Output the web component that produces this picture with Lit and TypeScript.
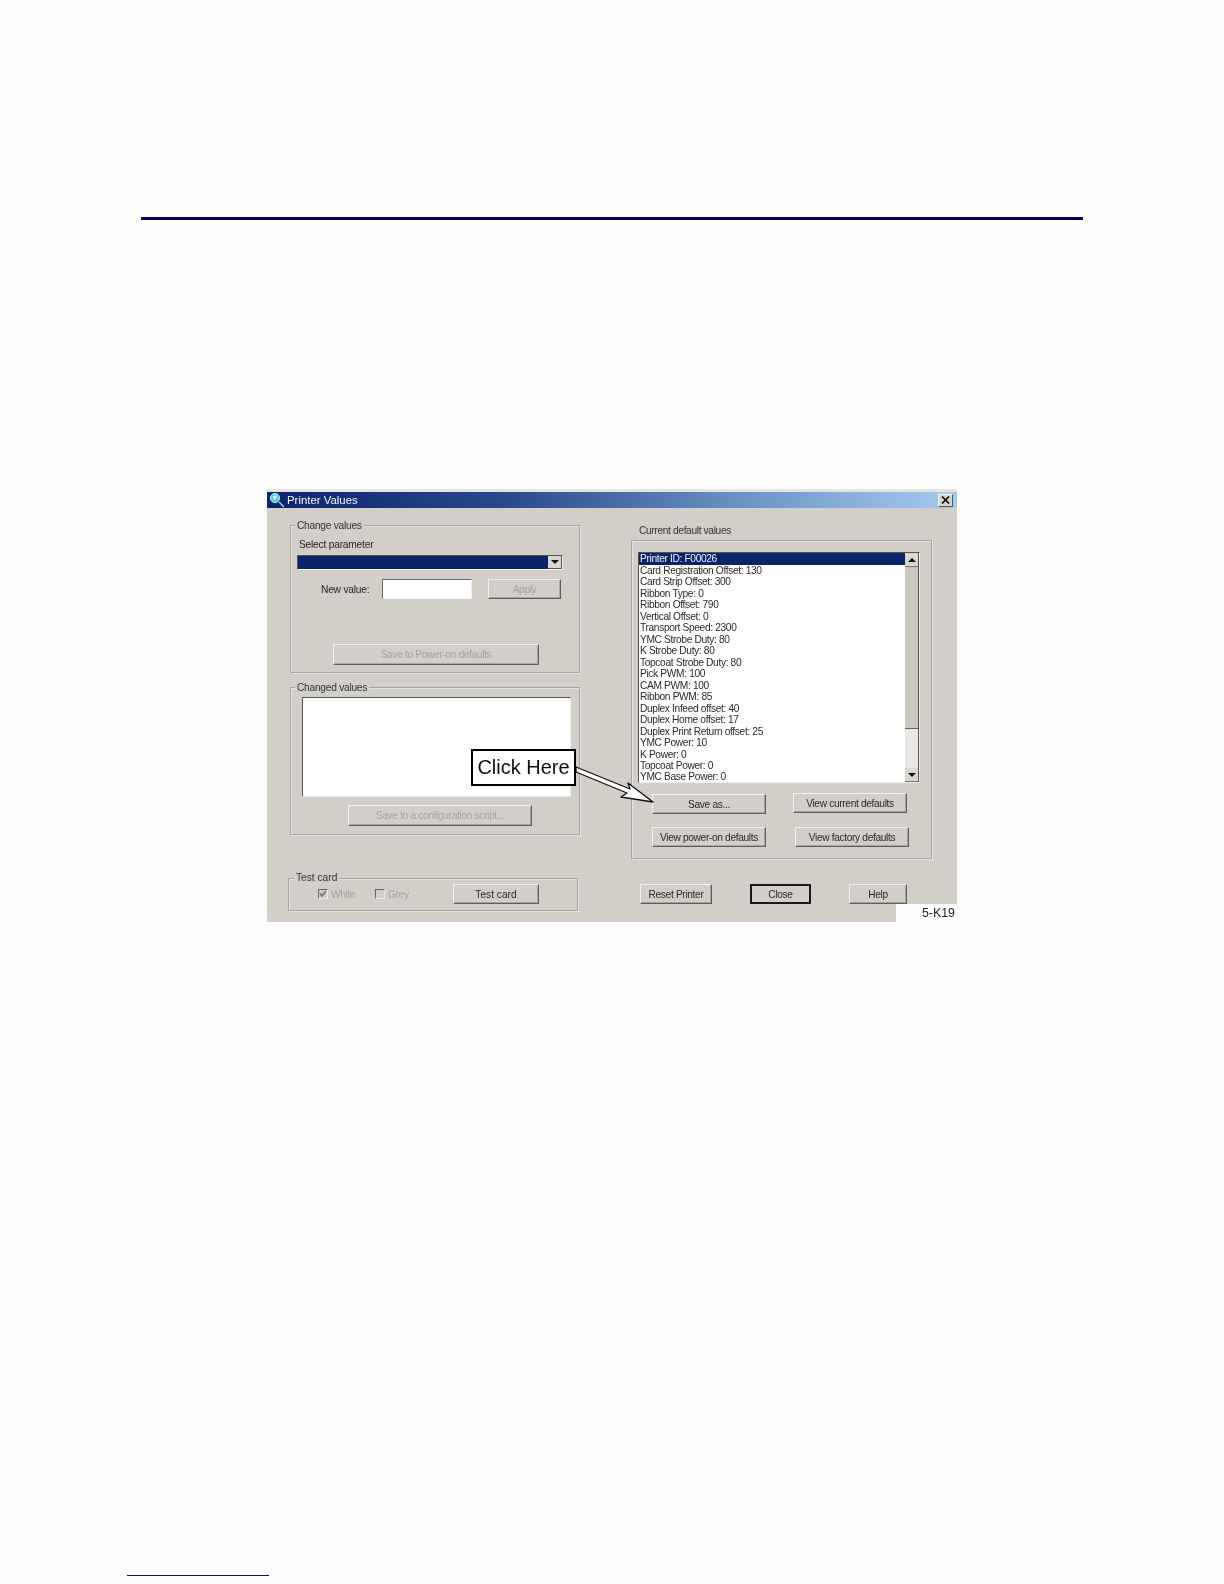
import { LitElement, html, css } from "lit";
import { customElement } from "lit/decorators.js";

const ROWS = [
  "Printer ID: F00026",
  "Card Registration Offset: 130",
  "Card Strip Offset: 300",
  "Ribbon Type: 0",
  "Ribbon Offset: 790",
  "Vertical Offset: 0",
  "Transport Speed: 2300",
  "YMC Strobe Duty: 80",
  "K Strobe Duty: 80",
  "Topcoat Strobe Duty: 80",
  "Pick PWM: 100",
  "CAM PWM: 100",
  "Ribbon PWM: 85",
  "Duplex Infeed offset: 40",
  "Duplex Home offset: 17",
  "Duplex Print Return offset: 25",
  "YMC Power: 10",
  "K Power: 0",
  "Topcoat Power: 0",
  "YMC Base Power: 0",
];

@customElement("app-root")
export class AppRoot extends LitElement {
  static styles = css`
    :host {
      display: block;
      height: 1584px;
      background: #fefefe;
      overflow: hidden;
      font-family: "Liberation Sans", Arial, sans-serif;
    }
    .rule {
      margin: 217px 0 0 141px;
      width: 942px;
      height: 3px;
      background: #000066;
    }
    .dialog {
      position: relative;
      margin: 269px 0 0 267px;
      width: 690px;
      height: 433px;
      background: #d2cec8;
      font-size: 10.2px;
      letter-spacing: -0.35px;
      color: #262626;
      box-sizing: border-box;
      padding-top: 3px;
      box-shadow: inset 0 3px 0 #e6e4e0;
      filter: blur(0.3px);
    }
    .title {
      display: flex;
      align-items: center;
      height: 16px;
      background: linear-gradient(90deg, #0a246a 0%, #2a4a8a 35%, #6f95c6 70%, #a6caf0 100%);
      color: #f4f6fa;
      font-size: 11.4px;
      letter-spacing: 0;
      padding-right: 4px;
    }
    .ticon {
      width: 18px;
      height: 16px;
      margin-left: 2px;
      flex: none;
    }
    .ttext {
      flex: 1;
    }
    .x {
      width: 15px;
      height: 13px;
      background: #d8d5cf;
      border: 1px solid;
      border-color: #f4f3f0 #55534f #55534f #f4f3f0;
      box-sizing: border-box;
      display: flex;
      align-items: center;
      justify-content: center;
    }
    .body {
      display: grid;
      grid-template-columns: 290px 301px;
      column-gap: 51px;
      padding-left: 23px;
    }
    .col-l {
      padding-top: 17px;
    }
    .group {
      position: relative;
      box-sizing: border-box;
      border: 1px solid #a6a39e;
      box-shadow: 1px 1px 0 #e6e4e0, inset 1px 1px 0 #e6e4e0;
    }
    .legend {
      position: absolute;
      top: -7px;
      left: 4px;
      padding: 0 2px;
      line-height: 14px;
      background: #d2cec8;
      color: #333;
      letter-spacing: -0.25px;
    }
    .g1 {
      height: 148px;
      padding: 12px 0 0 6px;
    }
    .sel-label {
      height: 14px;
      line-height: 14px;
      margin-left: 2px;
      margin-bottom: 3px;
      letter-spacing: -0.2px;
    }
    .combo {
      display: flex;
      width: 266px;
      height: 15px;
      box-sizing: border-box;
      border: 1px solid;
      border-color: #55534f #f6f5f2 #f6f5f2 #55534f;
    }
    .combo-fill {
      flex: 1;
      background: #0a246a;
    }
    .combo-btn {
      width: 14px;
      display: flex;
      align-items: center;
      justify-content: center;
      background: #dad7d1;
      border-right: 1px solid #55534f;
      border-bottom: 1px solid #55534f;
      box-sizing: border-box;
    }
    .tri {
      width: 0;
      height: 0;
      border-left: 4px solid transparent;
      border-right: 4px solid transparent;
      border-top: 4px solid #111;
    }
    .tri.up {
      border-top: 0;
      border-bottom: 4px solid #111;
    }
    .row {
      display: flex;
      align-items: center;
    }
    .nv-row {
      margin-top: 9px;
      height: 20px;
    }
    .nv-label {
      width: 46px;
      margin-left: 24px;
      white-space: nowrap;
      letter-spacing: -0.2px;
    }
    .input {
      width: 90px;
      height: 20px;
      margin-left: 15px;
      background: #fff;
      box-sizing: border-box;
      border: 1px solid;
      border-color: #6a6864 #f0efec #f0efec #6a6864;
    }
    .btn {
      display: flex;
      align-items: center;
      justify-content: center;
      box-sizing: border-box;
      height: 20px;
      white-space: nowrap;
      border: 1px solid;
      border-color: #f2f1ee #5f5d5a #5f5d5a #f2f1ee;
      box-shadow: inset -1px -1px 0 #a9a6a1;
      color: #2a2a2a;
      flex: none;
    }
    .off {
      color: #a5a29c;
    }
    .apply {
      width: 73px;
      margin-left: 16px;
    }
    .save-pwr {
      width: 206px;
      height: 21px;
      margin: 45px 0 0 36px;
    }
    .g2 {
      height: 148px;
      margin-top: 14px;
      padding: 9px 0 0 11px;
    }
    .ta {
      width: 269px;
      height: 100px;
      box-sizing: border-box;
      background: #fff;
      border: 1px solid;
      border-color: #55534f #ecebe7 #ecebe7 #55534f;
    }
    .save-cfg {
      width: 184px;
      height: 21px;
      margin: 8px 0 0 46px;
    }
    .g3 {
      height: 33px;
      width: 290px;
      margin: 43px 0 0 -2px;
      padding: 5px 0 0 29px;
      display: flex;
      align-items: flex-start;
    }
    .g3 .legend {
      top: -8px;
      left: 5px;
      letter-spacing: 0;
    }
    .chk-wrap {
      display: flex;
      align-items: center;
      height: 20px;
      flex: none;
    }
    .w1 { width: 57px; }
    .w2 { width: 78px; }
    .chk {
      width: 10px;
      height: 10px;
      margin-right: 3px;
      box-sizing: border-box;
      border: 1px solid;
      border-color: #6a6864 #ecebe7 #ecebe7 #6a6864;
      display: flex;
    }
    .tc {
      width: 86px;
      height: 20px;
      letter-spacing: 0;
    }
    .cur-label {
      height: 14px;
      line-height: 14px;
      margin: 16px 0 2px 8px;
      color: #333;
    }
    .g4 {
      height: 319px;
      padding: 11px 0 0 6px;
    }
    .list {
      display: flex;
      width: 282px;
      height: 231px;
      box-sizing: border-box;
      background: #fff;
      border: 1px solid;
      border-color: #55534f #ecebe7 #ecebe7 #55534f;
    }
    .items {
      flex: 1;
      overflow: hidden;
    }
    .item {
      height: 11.47px;
      line-height: 11.47px;
      padding-left: 1px;
      white-space: nowrap;
      color: #2a2a2a;
    }
    .item.sel {
      height: 12px;
      background: #0a246a;
      color: #eef0f6;
    }
    .sb {
      width: 13px;
      flex: none;
      display: flex;
      flex-direction: column;
      background: #eae8e4;
      border-right: 1px solid #55534f;
      box-sizing: content-box;
    }
    .sb-btn {
      height: 14px;
      flex: none;
      display: flex;
      align-items: center;
      justify-content: center;
      background: #dad7d1;
      border-bottom: 1px solid #77756f;
      box-sizing: border-box;
    }
    .sb-thumb {
      height: 162px;
      flex: none;
      background: #cbc8c2;
      border-bottom: 1px solid #5f5d5a;
      box-sizing: border-box;
    }
    .sb-track {
      flex: 1;
    }
    .r1 {
      margin: 11px 0 0 14px;
      height: 20px;
      align-items: flex-start;
    }
    .r2 {
      margin: 13px 0 0 14px;
      height: 20px;
    }
    .b114 { width: 114px; }
    .vc {
      width: 114px;
      margin: -1px 0 0 27px;
    }
    .vf {
      width: 114px;
      margin-left: 29px;
    }
    .r3 {
      margin: 25px 0 0 9px;
      height: 20px;
    }
    .reset { width: 72px; }
    .close {
      width: 61px;
      margin-left: 38px;
      border: 2px solid;
      border-color: #1a1a1a;
      box-shadow: none;
    }
    .help {
      width: 58px;
      margin-left: 38px;
    }
    .notch {
      position: absolute;
      right: 0;
      bottom: 0;
      width: 61px;
      height: 18px;
      background: #fefefe;
      color: #222;
      font-size: 12.4px;
      letter-spacing: 0;
      line-height: 19px;
      text-align: right;
      padding-right: 2px;
      box-sizing: border-box;
    }
    .callout {
      position: absolute;
      left: 204px;
      top: 260px;
      width: 105px;
      height: 37px;
      box-sizing: border-box;
      border: 2px solid #000;
      background: #fff;
      color: #111;
      font-size: 20px;
      letter-spacing: 0;
      display: flex;
      align-items: center;
      justify-content: center;
    }
    .arrow {
      position: absolute;
      left: 300px;
      top: 270px;
      width: 100px;
      height: 50px;
    }
    .foot {
      margin: 653px 0 0 127px;
      width: 142px;
      height: 1px;
      background: #101080;
    }
  `;

  render() {
    return html`
      <div class="rule"></div>
      <div class="dialog">
        <div class="title">
          <svg class="ticon" viewBox="0 0 18 16">
            <circle cx="6" cy="6" r="4.6" fill="#5fd0d8" stroke="#bfeef2" stroke-width="1" />
            <path d="M4 4.5 L7 3.5 L8 6 L5 7.5 Z" fill="#e8fbff" />
            <path d="M10 10 L15 15" stroke="#cfd6e6" stroke-width="1.2" />
          </svg>
          <span class="ttext">Printer Values</span>
          <div class="x">
            <svg width="9" height="8" viewBox="0 0 9 8">
              <path d="M1 0.5 L8 7.5 M8 0.5 L1 7.5" stroke="#111" stroke-width="1.7" />
            </svg>
          </div>
        </div>
        <div class="body">
          <div class="col-l">
            <div class="group g1">
              <span class="legend">Change values</span>
              <div class="sel-label">Select parameter</div>
              <div class="combo">
                <div class="combo-fill"></div>
                <div class="combo-btn"><div class="tri"></div></div>
              </div>
              <div class="row nv-row">
                <span class="nv-label">New value:</span>
                <div class="input"></div>
                <div class="btn off apply">Apply</div>
              </div>
              <div class="btn off save-pwr">Save to Power-on defaults</div>
            </div>
            <div class="group g2">
              <span class="legend">Changed values</span>
              <div class="ta"></div>
              <div class="btn off save-cfg">Save to a configuration script...</div>
            </div>
            <div class="group g3">
              <span class="legend">Test card</span>
              <div class="chk-wrap w1 off">
                <div class="chk">
                  <svg width="8" height="8" viewBox="0 0 8 8">
                    <path d="M1 3.5 L3 6 L7 1" fill="none" stroke="#77756f" stroke-width="1.6" />
                  </svg>
                </div>
                White
              </div>
              <div class="chk-wrap w2 off"><div class="chk"></div>Grey</div>
              <div class="btn tc">Test card</div>
            </div>
          </div>
          <div class="col-r">
            <div class="cur-label">Current default values</div>
            <div class="group g4">
              <div class="list">
                <div class="items">
                  ${ROWS.map(
                    (r, i) => html`<div class="item ${i === 0 ? "sel" : ""}">${r}</div>`
                  )}
                </div>
                <div class="sb">
                  <div class="sb-btn"><div class="tri up"></div></div>
                  <div class="sb-thumb"></div>
                  <div class="sb-track"></div>
                  <div class="sb-btn"><div class="tri"></div></div>
                </div>
              </div>
              <div class="row r1">
                <div class="btn b114">Save as...</div>
                <div class="btn vc">View current defaults</div>
              </div>
              <div class="row r2">
                <div class="btn b114">View power-on defaults</div>
                <div class="btn vf">View factory defaults</div>
              </div>
            </div>
            <div class="row r3">
              <div class="btn reset">Reset Printer</div>
              <div class="btn close">Close</div>
              <div class="btn help">Help</div>
            </div>
          </div>
        </div>
        <svg class="arrow" viewBox="0 0 100 50">
          <path
            d="M9 8 L63 30 L61 24 L86 43 L54 38 L60 34 L9 13 Z"
            fill="#fff"
            stroke="#111"
            stroke-width="1.3"
            stroke-linejoin="round"
          />
        </svg>
        <div class="callout">Click Here</div>
        <div class="notch">5-K19</div>
      </div>
      <div class="foot"></div>
    `;
  }
}
